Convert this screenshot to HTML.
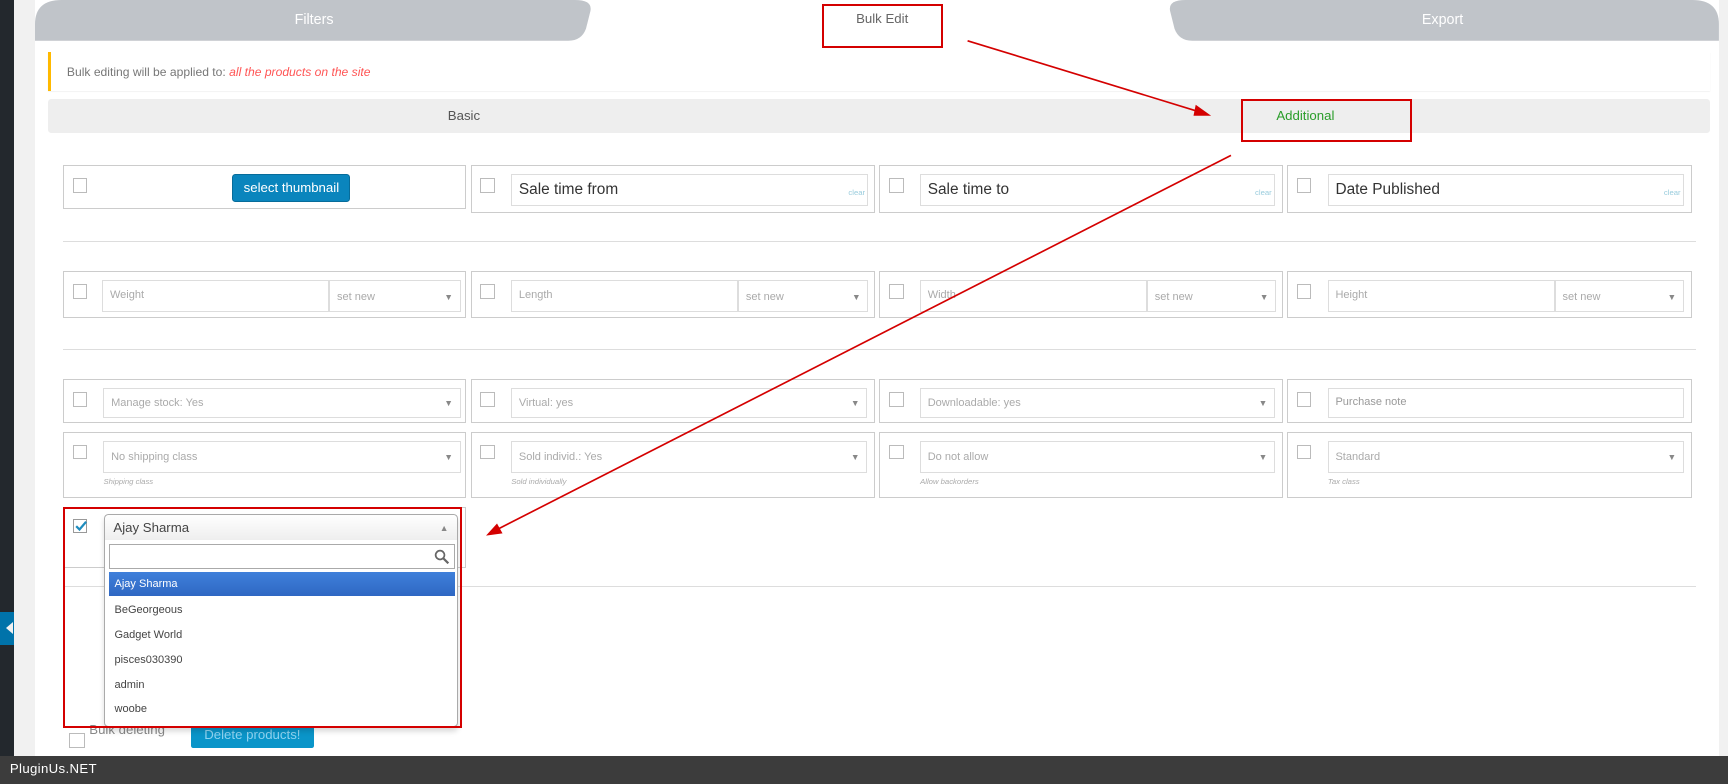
<!DOCTYPE html>
<html><head><meta charset="utf-8"><style>
html,body{margin:0;padding:0;width:1728px;height:784px;overflow:hidden;background:#f1f1f1}
#w{position:absolute;left:0;top:0;width:1568px;height:711px;zoom:1.10204;font-family:"Liberation Sans",sans-serif;color:#555}
.a{position:absolute;box-sizing:border-box}
.cell{position:absolute;box-sizing:border-box;border:1px solid #ccc;background:#fff}
.cb{position:absolute;width:13px;height:13px;border:1px solid #bbb;background:#fff;box-sizing:border-box}
.inp{position:absolute;box-sizing:border-box;border:1px solid #ddd;background:#fff;font-size:10px;color:#aaa;padding:0 6px}
.tri{position:absolute;right:6px;font-size:8px;color:#888}
.hr{position:absolute;left:57px;width:1482px;height:1px;background:#ddd}
.lbl{position:absolute;font-size:7px;font-style:italic;color:#aaa}
.clr{position:absolute;right:2px;top:3px;font-size:7px;color:#9cd}
</style></head><body><div id="w">
<div class="a" style="left:0;top:0;width:13px;height:686px;background:#23282d"></div>
<div class="a" style="left:0;top:555px;width:13px;height:30px;background:#0073aa"></div>
<div class="a" style="left:5px;top:564px;width:0;height:0;border-top:6px solid transparent;border-bottom:6px solid transparent;border-right:7px solid #f1f1f1"></div>
<div class="a" style="left:32px;top:37px;width:1528px;height:649px;background:#fff"></div>
<div class="a" style="left:32px;top:0;width:1528px;height:37px;background:#fff"></div>
<svg class="a" style="left:32px;top:0" width="1528" height="37">
<path d="M0 37 L0 22 Q0 0 24 0 L490 0 Q506 0 504 10 L500 26 Q496 37 484 37 Z" fill="#c0c4c9"/>
<path d="M1528 37 L1528 22 Q1528 0 1504 0 L1044 0 Q1028 0 1030 10 L1034 26 Q1038 37 1050 37 Z" fill="#c0c4c9"/>
</svg>
<div class="a" style="left:32px;top:0;width:506px;color:#fff;font-size:13px;text-align:center;line-height:37px">Filters</div>
<div class="a" style="left:1058px;top:0;width:502px;color:#fff;font-size:13px;text-align:center;line-height:37px">Export</div>
<div class="a" style="left:746px;top:10px;width:109px;text-align:center;font-size:12px;color:#666">Bulk Edit</div>
<div class="a" style="left:44px;top:47px;width:1508px;height:36px;border-left:3px solid #ffb900;box-shadow:0 1px 1px rgba(0,0,0,.08);font-size:11px;line-height:38px;padding-left:14px;color:#777">Bulk editing will be applied to: <i style="color:#f55">all the products on the site</i></div>
<div class="a" style="left:44px;top:90px;width:1508px;height:31px;background:#eee;border-radius:3px"></div>
<div class="a" style="left:44px;top:90px;width:754px;line-height:31px;text-align:center;font-size:12px;color:#555">Basic</div>
<div class="a" style="left:1126px;top:90px;width:117px;line-height:31px;text-align:center;font-size:12px;color:#2a9d2a">Additional</div>

<div class="cell" style="left:57px;top:150px;width:366px;height:40px"><div class="cb" style="left:8px;top:11px"></div>
<div class="a" style="left:153px;top:7px;width:107px;height:25px;background:#0a85bd;border:1px solid #076c9a;border-radius:3px;color:#fff;font-size:12px;text-align:center;line-height:23px">select thumbnail</div></div>
<div class="cell" style="left:427px;top:150px;width:367px;height:43px"><div class="cb" style="left:8px;top:11px"></div><div class="inp" style="left:36px;top:7px;width:324px;height:29px;font-size:14px;color:#333;line-height:27px">Sale time from<span class="clr">clear</span></div></div>
<div class="cell" style="left:798px;top:150px;width:366px;height:43px"><div class="cb" style="left:8px;top:11px"></div><div class="inp" style="left:36px;top:7px;width:322px;height:29px;font-size:14px;color:#333;line-height:27px">Sale time to<span class="clr">clear</span></div></div>
<div class="cell" style="left:1168px;top:150px;width:367px;height:43px"><div class="cb" style="left:8px;top:11px"></div><div class="inp" style="left:36px;top:7px;width:323px;height:29px;font-size:14px;color:#333;line-height:27px">Date Published<span class="clr">clear</span></div></div>
<div class="hr" style="top:219px"></div>

<div class="cell" style="left:57px;top:246px;width:366px;height:43px"><div class="cb" style="left:8px;top:11px"></div><div class="inp" style="left:35px;top:7px;width:206px;height:29px;line-height:26px">Weight</div><div class="inp" style="left:241px;top:7px;width:119px;height:29px;line-height:30px">set new<span class="tri">▼</span></div></div>
<div class="cell" style="left:427px;top:246px;width:367px;height:43px"><div class="cb" style="left:8px;top:11px"></div><div class="inp" style="left:36px;top:7px;width:206px;height:29px;line-height:26px">Length</div><div class="inp" style="left:242px;top:7px;width:118px;height:29px;line-height:30px">set new<span class="tri">▼</span></div></div>
<div class="cell" style="left:798px;top:246px;width:366px;height:43px"><div class="cb" style="left:8px;top:11px"></div><div class="inp" style="left:36px;top:7px;width:206px;height:29px;line-height:26px">Width</div><div class="inp" style="left:242px;top:7px;width:117px;height:29px;line-height:30px">set new<span class="tri">▼</span></div></div>
<div class="cell" style="left:1168px;top:246px;width:367px;height:43px"><div class="cb" style="left:8px;top:11px"></div><div class="inp" style="left:36px;top:7px;width:206px;height:29px;line-height:26px">Height</div><div class="inp" style="left:242px;top:7px;width:117px;height:29px;line-height:30px">set new<span class="tri">▼</span></div></div>
<div class="hr" style="top:317px"></div>

<div class="cell" style="left:57px;top:344px;width:366px;height:40px"><div class="cb" style="left:8px;top:11px"></div><div class="inp" style="left:36px;top:7px;width:324px;height:27px;line-height:27px">Manage stock: Yes<span class="tri">▼</span></div></div>
<div class="cell" style="left:427px;top:344px;width:367px;height:40px"><div class="cb" style="left:8px;top:11px"></div><div class="inp" style="left:36px;top:7px;width:323px;height:27px;line-height:27px">Virtual: yes<span class="tri">▼</span></div></div>
<div class="cell" style="left:798px;top:344px;width:366px;height:40px"><div class="cb" style="left:8px;top:11px"></div><div class="inp" style="left:36px;top:7px;width:322px;height:27px;line-height:27px">Downloadable: yes<span class="tri">▼</span></div></div>
<div class="cell" style="left:1168px;top:344px;width:367px;height:40px"><div class="cb" style="left:8px;top:11px"></div><div class="inp" style="left:36px;top:7px;width:323px;height:27px;line-height:24px;color:#999">Purchase note</div></div>
<div class="cell" style="left:57px;top:392px;width:366px;height:60px"><div class="cb" style="left:8px;top:11px"></div><div class="inp" style="left:36px;top:7px;width:324px;height:29px;line-height:29px">No shipping class<span class="tri">▼</span></div><div class="lbl" style="left:36px;top:40px">Shipping class</div></div>
<div class="cell" style="left:427px;top:392px;width:367px;height:60px"><div class="cb" style="left:8px;top:11px"></div><div class="inp" style="left:36px;top:7px;width:323px;height:29px;line-height:29px">Sold individ.: Yes<span class="tri">▼</span></div><div class="lbl" style="left:36px;top:40px">Sold individually</div></div>
<div class="cell" style="left:798px;top:392px;width:366px;height:60px"><div class="cb" style="left:8px;top:11px"></div><div class="inp" style="left:36px;top:7px;width:322px;height:29px;line-height:29px">Do not allow<span class="tri">▼</span></div><div class="lbl" style="left:36px;top:40px">Allow backorders</div></div>
<div class="cell" style="left:1168px;top:392px;width:367px;height:60px"><div class="cb" style="left:8px;top:11px"></div><div class="inp" style="left:36px;top:7px;width:323px;height:29px;line-height:29px">Standard<span class="tri">▼</span></div><div class="lbl" style="left:36px;top:40px">Tax class</div></div>
<div class="cell" style="left:57px;top:460px;width:366px;height:55px"><div class="cb" style="left:8px;top:10px;border-color:#999"></div>
<svg class="a" style="left:9px;top:10px" width="13" height="13"><path d="M2 6.5L5 9.5L11 2.5" fill="none" stroke="#1e8cbe" stroke-width="2"/></svg></div>
<div class="hr" style="top:532px"></div>

<div class="cb" style="left:63px;top:665px;width:14px;height:14px"></div>
<div class="a" style="left:81px;top:655px;font-size:12px;color:#888">Bulk deleting</div>
<div class="a" style="left:173px;top:655px;width:112px;height:24px;background:#0a95c9;border-radius:2px;color:#8fd3f0;font-size:12px;text-align:center;line-height:24px">Delete products!</div>

<div class="a" style="left:94px;top:466px;width:322px;height:194px;background:#fff;border:1px solid #aaa;border-radius:4px;box-shadow:0 4px 5px rgba(0,0,0,.15)">
<div class="a" style="left:0;top:0;width:320px;height:23px;background:linear-gradient(#fff,#eee);border-radius:4px 4px 0 0;font-size:12px;color:#444;line-height:24px;padding-left:8px">Ajay Sharma<span style="position:absolute;right:8px;font-size:8px;color:#888">▲</span></div>
<div class="a" style="left:4px;top:27px;width:314px;height:22px;border:1px solid #aaa;background:#fff">
<svg width="14" height="14" style="position:absolute;right:4px;top:3px" viewBox="0 0 14 14"><circle cx="5.5" cy="5.5" r="4" fill="none" stroke="#666" stroke-width="1.6"/><path d="M8.5 8.5L13 13" stroke="#666" stroke-width="2"/></svg></div>
<div class="a" style="left:4px;top:52px;width:314px;height:22px;background:linear-gradient(#3f80db,#2f67c3);color:#fff;font-size:10px;line-height:22px;padding-left:5px">Ajay Sharma</div>
<div class="a" style="left:9px;top:76px;font-size:10px;color:#444;line-height:22.5px">BeGeorgeous<br>Gadget World<br>pisces030390<br>admin<br>woobe</div>
</div>

<div class="a" style="left:746px;top:4px;width:110px;height:40px;border:2px solid #d40000"></div>
<div class="a" style="left:1126px;top:90px;width:155px;height:39px;border:2px solid #d40000"></div>
<div class="a" style="left:57px;top:460px;width:362px;height:201px;border:2px solid #d40000"></div>
<svg class="a" style="left:0;top:0" width="1568" height="711">
<line x1="878" y1="37" x2="1090" y2="102" stroke="#d40000" stroke-width="1.5"/>
<polygon points="1099,105 1085,95 1083,105" fill="#d40000"/>
<line x1="1117" y1="141" x2="452" y2="480" stroke="#d40000" stroke-width="1.5"/>
<polygon points="441,486 451,475 456,484" fill="#d40000"/>
</svg>

<div class="a" style="left:0;top:686px;width:1568px;height:25px;background:#3c3c3c;color:#fff;font-size:12px;line-height:24px;padding-left:9px;letter-spacing:.3px">PluginUs.NET</div>
</div></body></html>
